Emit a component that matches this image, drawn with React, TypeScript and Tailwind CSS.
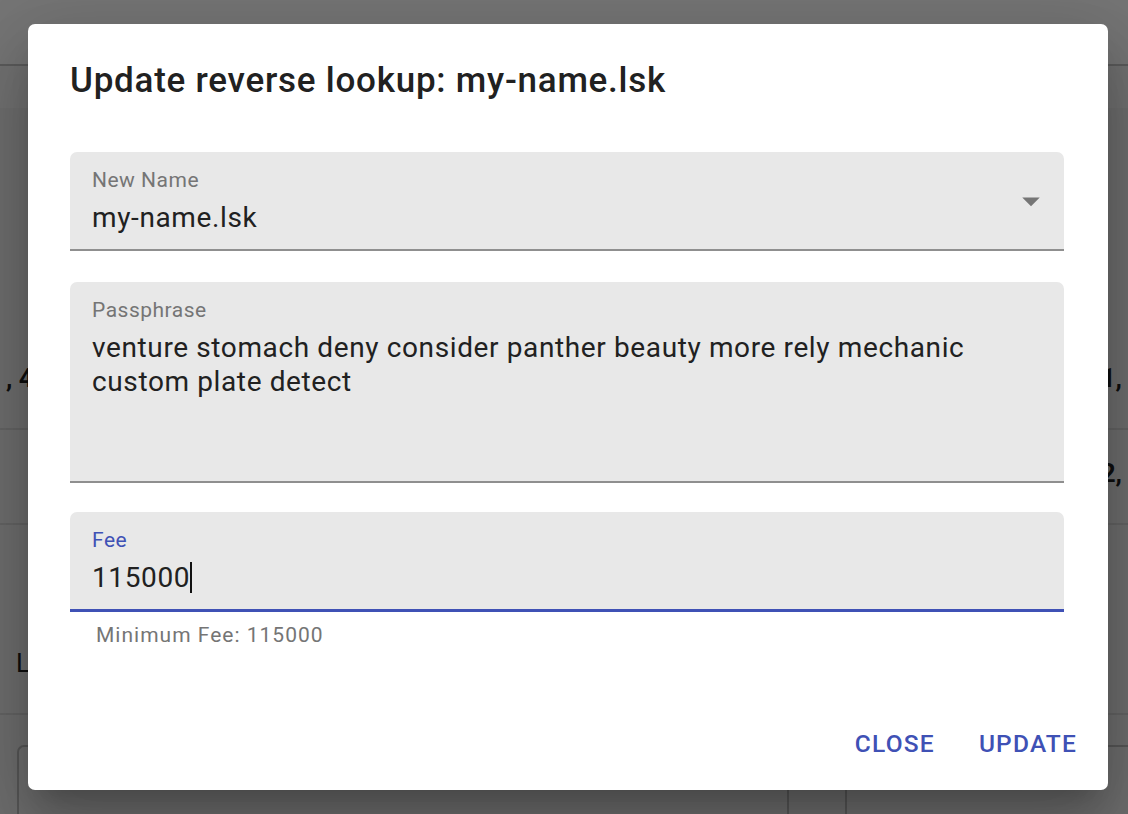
import React from 'react';

const font = { fontFamily: 'Roboto, "Noto Sans", "Liberation Sans", sans-serif' };

function BackgroundPage() {
  return (
    <div className="h-[814px] w-full overflow-hidden bg-[#6e6e6e]">
      {/* app bar */}
      <div className="h-[66px] border-b-2 border-[#5b5b5b] bg-[#757575]" />
      <div className="h-[42px] bg-[#717171]" />

      {/* table rows */}
      <div className="h-[322px] border-b-2 border-[#646464]">
        <div className="flex h-full items-end justify-between pb-[30px] text-[26px] font-bold text-[#0e0e0e]">
          <span className="pl-[6px]">, 45</span>
          <span className="pr-[6px]">11,</span>
        </div>
      </div>
      <div className="h-[95px] border-b-2 border-[#646464]">
        <div className="flex h-full items-center justify-end pb-[6px] pr-[6px] text-[26px] font-bold text-[#0e0e0e]">
          <span>22,</span>
        </div>
      </div>
      <div className="h-[190px] border-b-2 border-[#646464]">
        <div className="flex h-full items-end pb-[30px] pl-[16px] text-[26px] text-[#0e0e0e]">
          <span>L</span>
        </div>
      </div>

      {/* card below the table */}
      <div className="flex pl-[17px] pt-[30px]">
        <div className="h-[80px] flex-1 rounded-tl-[7px] border-l-2 border-t-2 border-[#575757]">
          <div className="ml-[768px] mt-[42px] flex h-full">
            <div className="h-full w-[60px] border-l-2 border-r-2 border-[#575757]" />
          </div>
        </div>
      </div>
    </div>
  );
}

function FilledField({
  label,
  focused,
  height,
  children,
  trailing,
}: {
  label: string;
  focused?: boolean;
  height: string;
  children: React.ReactNode;
  trailing?: React.ReactNode;
}) {
  return (
    <div
      className={`relative rounded-t-[7px] bg-[#e8e8e8] ${height} ${
        focused ? 'border-b-[3.5px] border-[#3f51b5]' : 'border-b-2 border-[#8f8f8f]'
      }`}
    >
      <div
        className={`absolute left-[22px] top-[18px] text-[21px] leading-none tracking-[0.5px] ${
          focused ? 'text-[#3f51b5]' : 'text-[#757575]'
        }`}
      >
        {label}
      </div>
      <div className="px-[22px] pt-[49px] text-[28px] leading-[33.5px] tracking-[0.62px] text-[#212121]">
        {children}
      </div>
      {trailing}
    </div>
  );
}

export default function App() {
  return (
    <div className="relative h-[814px] w-[1128px] overflow-hidden" style={font}>
      <BackgroundPage />

      <div className="absolute left-[28px] top-[24px] flex h-[766px] w-[1080px] flex-col rounded-[7px] bg-white shadow-[0_19px_26px_-12px_rgba(0,0,0,0.2),0_42px_66px_5px_rgba(0,0,0,0.14),0_16px_80px_14px_rgba(0,0,0,0.12)]">
        <h2 className="px-[42px] pt-[29px] text-[35px] font-medium leading-[56px] tracking-[0.75px] text-[#212121]">
          Update reverse lookup: my-name.lsk
        </h2>

        <div className="pl-[42px] pr-[44px]">
          <div className="mt-[43px]">
            <FilledField
              label="New Name"
              height="h-[99px]"
              trailing={
                <svg
                  viewBox="0 0 24 24"
                  className="absolute right-[12px] top-[28px] h-[42px] w-[42px] fill-[#757575]"
                >
                  <path d="M7 10l5 5 5-5z" />
                </svg>
              }
            >
              my-name.lsk
            </FilledField>
          </div>

          <div className="mt-[31px]">
            <FilledField label="Passphrase" height="h-[201px]">
              venture stomach deny consider panther beauty more rely mechanic
              <br />
              custom plate detect
            </FilledField>
          </div>

          <div className="mt-[29px]">
            <FilledField label="Fee" focused height="h-[100px]">
              <span className="inline-flex items-center">
                115000
                <span className="inline-block h-[31px] w-[2px] bg-[#111]" />
              </span>
            </FilledField>
            <div className="ml-[26px] mt-[6px] text-[21px] leading-[35px] tracking-[1px] text-[#757575]">
              Minimum Fee: 115000
            </div>
          </div>
        </div>

        <div className="mt-auto flex items-center justify-end gap-[14px] p-[14px] pr-[17px]">
          <button className="h-[63px] min-w-[112px] rounded-[7px] px-[14px] text-[24.5px] font-medium uppercase tracking-[1.2px] text-[#3f51b5]">
            Close
          </button>
          <button className="h-[63px] min-w-[112px] rounded-[7px] px-[14px] text-[24.5px] font-medium uppercase tracking-[1.2px] text-[#3f51b5]">
            Update
          </button>
        </div>
      </div>
    </div>
  );
}
